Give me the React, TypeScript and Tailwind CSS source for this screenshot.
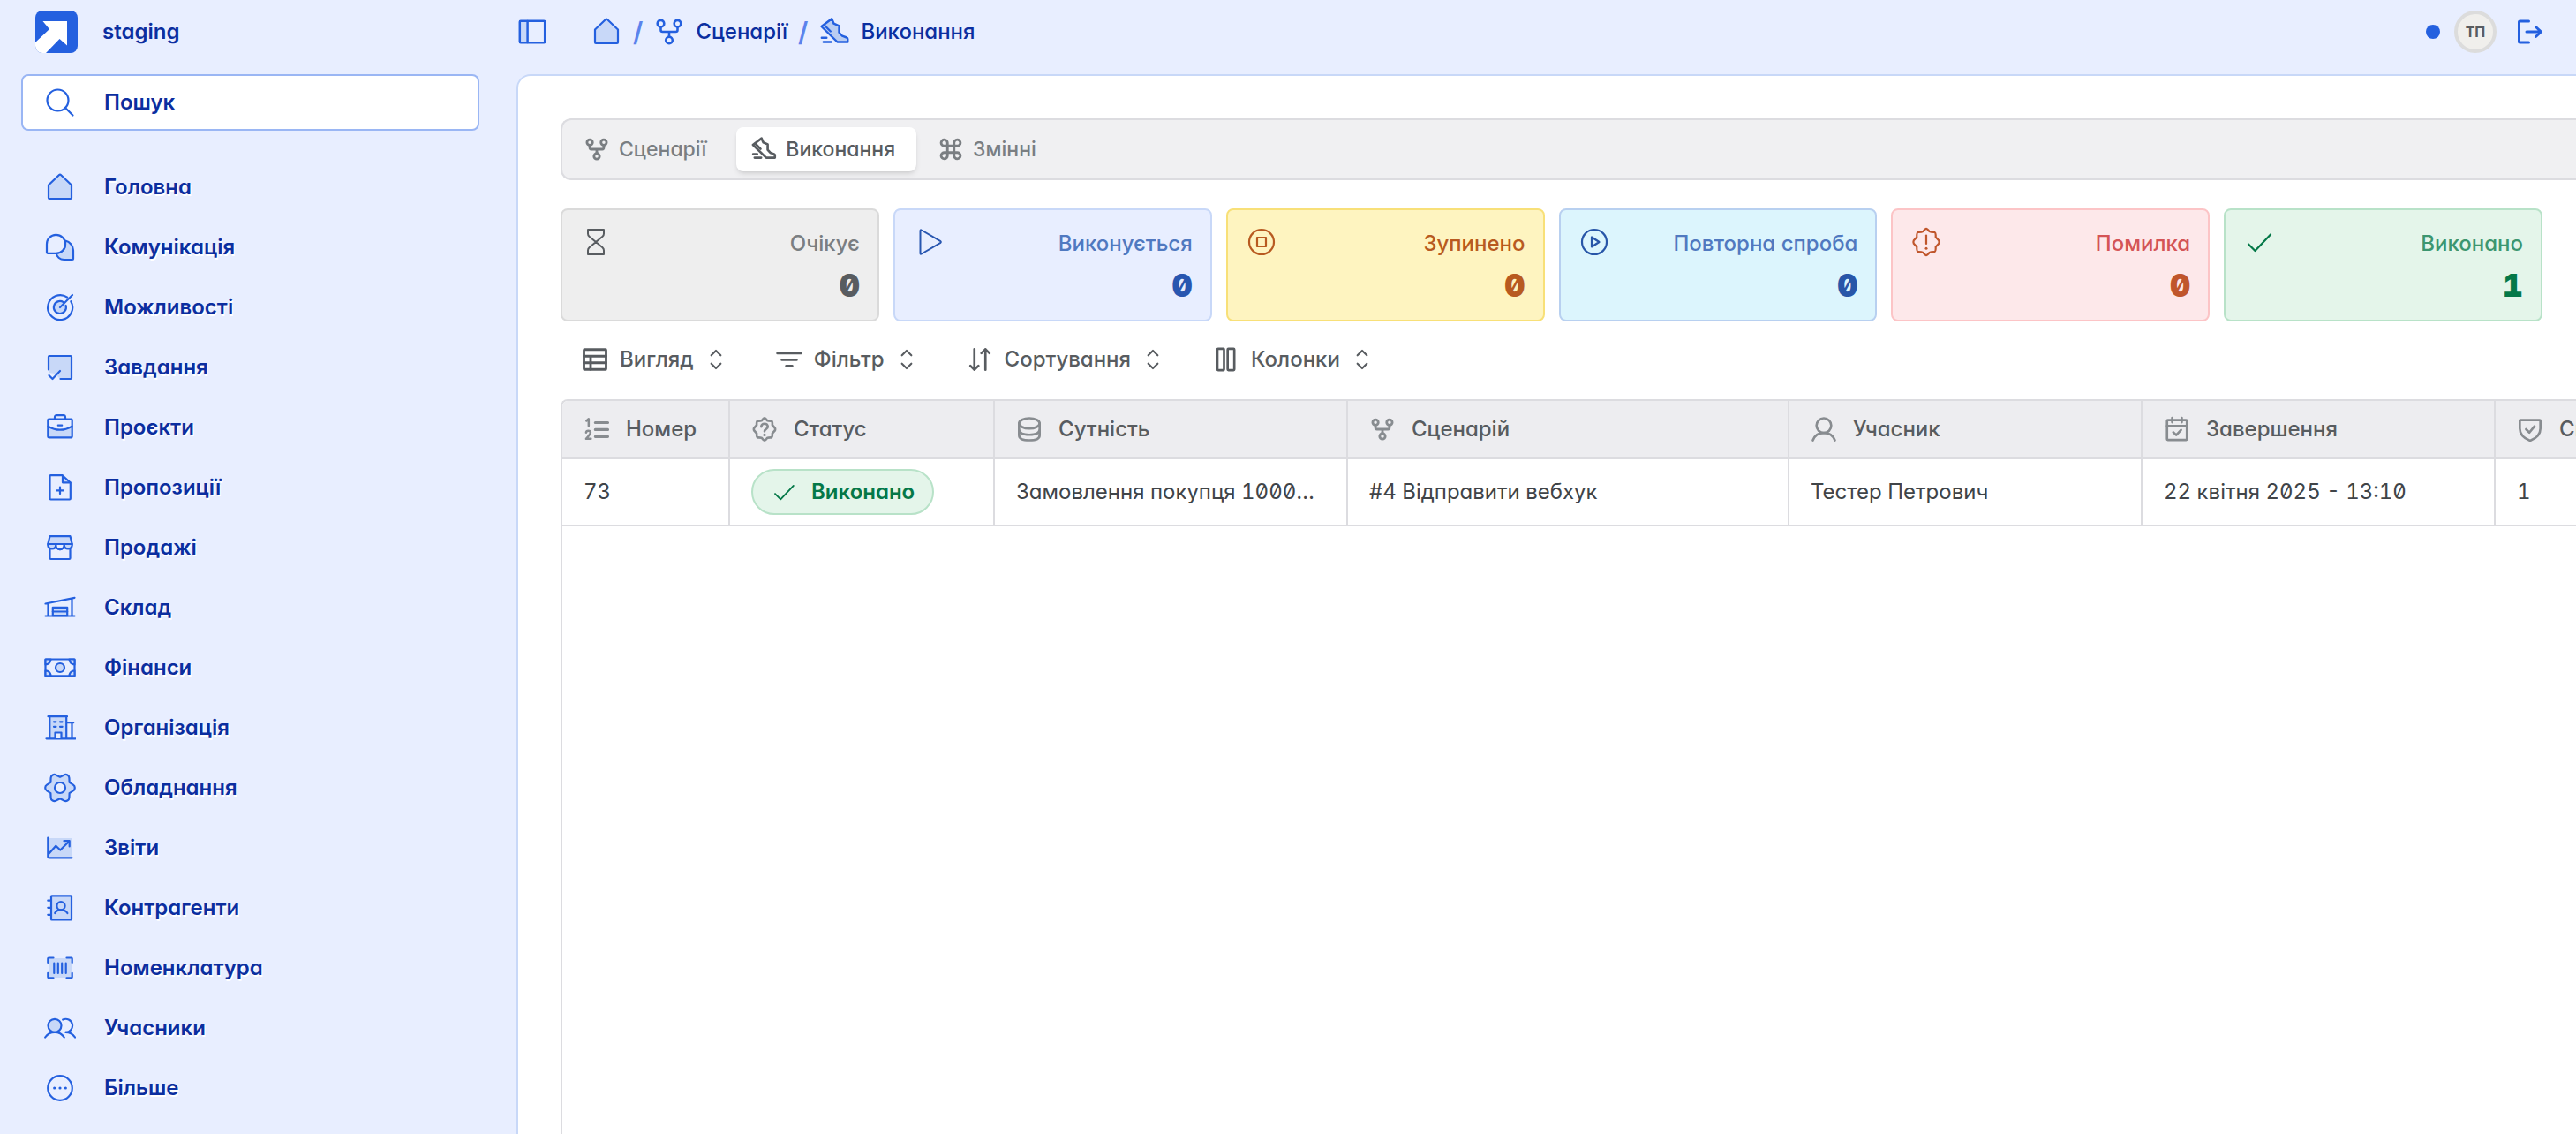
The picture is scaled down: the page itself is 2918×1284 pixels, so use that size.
import React from 'react';
import { clsx } from 'clsx';

interface IconProps {
  className?: string;
}

interface SvgProps extends IconProps {
  stroke?: string;
  children: React.ReactNode;
}

function Svg({ className = 'size-9', stroke = '2.2', children }: SvgProps) {
  return (
    <svg
      viewBox="0 0 36 36"
      fill="none"
      stroke="currentColor"
      strokeWidth={stroke}
      strokeLinecap="round"
      strokeLinejoin="round"
      aria-hidden="true"
      className={clsx('shrink-0', className)}
    >
      {children}
    </svg>
  );
}

const tint = 'fill-[#c8d8f8]';

/* Sidebar icons */

const HomeIcon = ({ className }: IconProps) => (
  <Svg className={className}>
    <path className={tint} d="M5 15.5 16.8 4.2q1.2-1.1 2.4 0L31 15.5V30q0 1-1 1H6q-1 0-1-1Z" />
  </Svg>
);

const ChatIcon = () => (
  <Svg>
    <path className={tint} d="M24 10.5A11.5 11.5 0 0 1 33 21.5V31q0 1-1 1H22.5a9.5 9.5 0 0 1-9-7.5A10 10 0 0 0 24 14Z" />
    <path fill="#e8eeff" d="M3 14.5a10.5 10.5 0 1 1 10.5 10.3H4q-1 0-1-1Z" />
  </Svg>
);

const TargetIcon = () => (
  <Svg>
    <circle cx="18" cy="18" r="7" className={tint} stroke="none" />
    <path d="M21.8 12.2A7 7 0 1 0 24.6 16" />
    <path d="M26.2 6.7A14 14 0 1 0 30.3 11.2" />
    <path d="m18 18 14-14" />
  </Svg>
);

const TaskIcon = () => (
  <Svg>
    <path className={tint} stroke="none" d="M5 5h26v26H18L12 25 5 24Z" />
    <path d="M5 20.5V6q0-1 1-1h24q1 0 1 1v24q0 1-1 1H18.5" />
    <path d="m5.500 27 4 4 8.500-9" />
  </Svg>
);

const BriefcaseIcon = () => (
  <Svg>
    <path className={tint} stroke="none" d="M4.500 16.500q13.500 8 27 0v12.500h-27Z" />
    <rect x="4.300" y="8.700" width="27.400" height="20.600" rx="1" />
    <path d="M12 8.500V6.500q0-2.300 2.300-2.300h7.400q2.300 0 2.300 2.300v2M4.500 16.700q13.500 8 27 0M15.800 15.700h4.400" />
  </Svg>
);

const ProposalIcon = () => (
  <Svg>
    <path className={tint} stroke="none" d="M21 4.500v7.800h8.500Z" />
    <path d="M6.500 5.200q0-1 1-1h13.200L29.800 12.500V30.500q0 1-1 1H7.500q-1 0-1-1Z" />
    <path d="M21 4.500v7.800h8.500M18 17.500v7.600M14.200 21.300h7.600" />
  </Svg>
);

const StoreIcon = () => (
  <Svg>
    <path className={tint} d="M6.500 5.200h23L31.700 14v1.500a4.600 4.600 0 0 1-9.100 0 4.600 4.600 0 0 1-9.200 0 4.600 4.600 0 0 1-9.100 0V14Z" />
    <path fill="#e8eeff" stroke="none" d="M13.400 15.500v-1h9.200v1a4.600 4.600 0 0 1-9.200 0Z" />
    <path d="M4.300 14h27.400M13.400 14v1.500a4.600 4.600 0 0 0 9.200 0V14M6.500 20.500v9.500q0 1 1 1h21q1 0 1-1v-9.500" />
  </Svg>
);

const WarehouseIcon = () => (
  <Svg>
    <rect className={tint} x="9.800" y="17.800" width="16.400" height="9.400" />
    <path d="M1.500 13.500 34.500 6.800M1.500 27.500h33M4.500 13v14.500M31.500 7.500v20M9.800 22.500h16.400" />
  </Svg>
);

const MoneyIcon = () => (
  <Svg>
    <rect x="1.500" y="8.500" width="33" height="18.800" rx="0.500" />
    <path className={tint} d="M1.500 14.500a6 6 0 0 0 6-6h-6ZM34.500 14.500a6 6 0 0 1-6-6h6ZM1.500 21.300a6 6 0 0 1 6 6h-6ZM34.500 21.300a6 6 0 0 0-6 6h6Z" />
    <circle className={tint} cx="18" cy="18" r="5" />
  </Svg>
);

const BuildingIcon = () => (
  <Svg>
    <path className={tint} stroke="none" d="M6 5h19v25H6Z" />
    <path d="M4.500 5.200h21.500M6.300 5.200v25M25.200 5.200v25M25.200 12.200h8M31.500 12.200v18M2.500 30.300h33" />
    <path d="M11 11.300h2.400M18 11.300h2.600M11 16.800h2.400M18 16.800h2.600" />
    <path fill="#e8eeff" d="M12.500 30v-6.500h7V30" />
  </Svg>
);

const GearIcon = () => (
  <Svg>
    <path
      className={tint}
      d="M32.900 14.600a4 4 0 0 1 0 6.800L28.650 24.150 28.400 29.200a4 4 0 0 1-5.900 3.400L18 30.300 13.500 32.600a4 4 0 0 1-5.900-3.400L7.350 24.150 3.100 21.400a4 4 0 0 1 0-6.800L7.350 11.850 7.600 6.800a4 4 0 0 1 5.900-3.400L18 5.700 22.500 3.400a4 4 0 0 1 5.900 3.400L28.650 11.850Z"
    />
    <circle cx="18" cy="18" r="6" fill="#e8eeff" />
  </Svg>
);

const ReportIcon = () => (
  <Svg>
    <path className={tint} stroke="none" d="M4.500 7h26.500v22H4.500Z" />
    <path d="M4.300 6.500v21.800q0 1 1 1h26.200M5.300 24.700l8-9 5 4.800L28.700 10.300M22.500 10.200h6.200v6.200" />
  </Svg>
);

const ContactsIcon = () => (
  <Svg>
    <rect className={tint} x="8" y="4.300" width="23" height="27.200" rx="0.800" />
    <path d="M4.300 9.700h3.500M4.300 17.800h3.500M4.300 25.800h3.500" />
    <circle cx="19" cy="15.800" r="4.600" />
    <path d="M12.200 24q1.500-3.600 6.800-3.600t7.400 3.600" />
  </Svg>
);

const BarcodeIcon = () => (
  <Svg>
    <path className={tint} stroke="none" d="M5 7h26v22H5Z" />
    <path d="M10.500 6.500H5.300q-1 0-1 1V12M25.500 6.500h5.200q1 0 1 1V12M10.500 29.300H5.300q-1 0-1-1v-4.500M25.500 29.300h5.200q1 0 1-1v-4.500M11.300 12.500v11.500M15.800 12.500v11.500M20.200 12.500v11.500M24.700 12.500v11.500" />
  </Svg>
);

const UsersIcon = () => (
  <Svg>
    <circle className={tint} cx="12" cy="15.300" r="7.500" />
    <path d="M1.200 28.500q3.800-5.700 10.800-5.700t10.700 5.700M21.200 8.600a7.500 7.500 0 1 1 3 14.200q7 0 10.800 5.700" />
  </Svg>
);

const MoreIcon = () => (
  <Svg>
    <circle cx="18" cy="18" r="13.800" />
    <path strokeWidth="3.200" d="M11.700 18h.01M18 18h.01M24.300 18h.01" />
  </Svg>
);

const SearchIcon = () => (
  <Svg className="size-9">
    <circle cx="15.500" cy="15.500" r="12" />
    <path d="m24 24 8.500 8.500" />
  </Svg>
);

/* Shared icons */

const ForkIcon = ({ className, stroke = '3.4' }: { className?: string; stroke?: string }) => (
  <Svg className={className} stroke={stroke}>
    <circle cx="8.500" cy="8.700" r="3.800" />
    <circle cx="27.500" cy="8.700" r="3.800" />
    <circle cx="18" cy="27.500" r="3.800" />
    <path d="M8.500 12.500v3.500q0 2 2 2h15q2 0 2-2v-3.500M18 18v5.500" />
  </Svg>
);

const ShoeIcon = ({ className, stroke, filled }: { className?: string; stroke?: string; filled?: boolean }) => (
  <Svg className={className} stroke={stroke}>
    <path
      className={filled ? 'fill-[#b9cdf2]' : undefined}
      d="M3.500 12 15.200 3.200l2.300 5.500 6 2.600v7.400l3.600 4 5 1.800q1.200.5 1.200 1.700v3.300H21.500Z"
    />
    <path d="m6.800 10.500 7 7M3.800 24.700h5.500M5.800 29.500h8.800" />
  </Svg>
);

const CommandIcon = ({ className }: IconProps) => (
  <Svg className={className} stroke="3.400">
    <path d="M13.500 13.500h9v9h-9ZM13.500 13.500H9.300a4.300 4.300 0 1 1 4.200-4.200ZM22.500 13.500V9.300a4.300 4.300 0 1 1 4.200 4.200ZM13.500 22.500v4.200a4.300 4.300 0 1 1-4.200-4.200ZM22.500 22.500h4.200a4.300 4.300 0 1 1-4.200 4.200Z" />
  </Svg>
);

const PanelIcon = () => (
  <Svg stroke="2.500">
    <path className="fill-[#c8d8f8]" stroke="none" d="M4 6h9v24H4Z" />
    <rect x="3.800" y="5.800" width="28.400" height="24.400" rx="1" />
    <path d="M12.600 6v24" />
  </Svg>
);

const LogoutIcon = () => (
  <Svg stroke="3">
    <path d="M16.500 6H6.500q-1 0-1 1v22q0 1 1 1h10M14 18h16.500M24.500 12.500l6 5.500-6 5.500" />
  </Svg>
);

const LogoMark = () => (
  <svg viewBox="0 0 48 48" aria-hidden="true" className="size-12 shrink-0">
    <rect width="48" height="48" rx="8" fill="#2460df" />
    <path fill="#fff" d="M8.500 12H36v27.500L27.500 32 12 48H8a8 8 0 0 1-8-8v-4l16-15Z" />
  </svg>
);

/* Status icons */

const HourglassIcon = () => (
  <Svg stroke="2">
    <path d="M9 4h18v4.500q0 2-1.500 3.300L18 18l-7.500-6.200Q9 10.500 9 8.500ZM9 32h18v-4.500q0-2-1.500-3.300L18 18l-7.500 6.200Q9 25.500 9 27.500Z" />
  </Svg>
);

const PlayIcon = () => (
  <Svg stroke="2">
    <path d="M8.500 5.200v25.600q0 1.500 1.300.7L31 19.200q1.700-1.200 0-2.400L9.800 4.500q-1.300-.8-1.300.7Z" />
  </Svg>
);

const StopIcon = () => (
  <Svg stroke="2.200">
    <circle cx="18" cy="18" r="14" />
    <rect x="13" y="13" width="10" height="10" />
  </Svg>
);

const RetryIcon = () => (
  <Svg stroke="2.200">
    <circle cx="18" cy="18" r="14" />
    <path d="M15 12.500v11l8.500-5.500Z" />
  </Svg>
);

const badgePath =
  'M18 2.800q1.200 0 3.600 3.300 1.500.8 5.600.700 1.700.4 1.500 5.600l3.500 3.900q.8 1.700 0 3.400l-3.500 3.900q.2 5.200-1.500 5.600-4.100-.1-5.600.7Q19.200 33.200 18 33.200t-3.600-3.300q-1.500-.8-5.600-.7-1.700-.4-1.500-5.600l-3.500-3.900q-.8-1.700 0-3.400l3.500-3.900q-.2-5.200 1.500-5.600 4.100.1 5.600-.7Q16.800 2.800 18 2.800Z';

const ErrorIcon = () => (
  <Svg stroke="2.200">
    <path d={badgePath} />
    <path d="M18 10.500v9.500" />
    <path strokeWidth="3" d="M18 25.200h.01" />
  </Svg>
);

const CheckIcon = ({ className }: IconProps) => (
  <Svg className={className} stroke="2.200">
    <path d="m6 20.500 7.500 7.500L31 9.500" />
  </Svg>
);

/* Toolbar icons */

const TableIcon = ({ className }: IconProps) => (
  <Svg className={className} stroke="3.400">
    <rect x="3" y="4.500" width="30" height="27" rx="1" />
    <path d="M3 13.500h30M3 22.500h30M12 13.500v18" />
  </Svg>
);

const FilterIcon = ({ className }: IconProps) => (
  <Svg className={className} stroke="3.400">
    <path d="M2 9.500h32M8 18.500h20M14 27h8" />
  </Svg>
);

const SortIcon = ({ className }: IconProps) => (
  <Svg className={className} stroke="3.200">
    <path d="M10.500 4v28M5 26.500l5.500 5.500 5.500-5.500M25.500 32V4M20 9.500 25.500 4l5.500 5.500" />
  </Svg>
);

const ColumnsIcon = ({ className }: IconProps) => (
  <Svg className={className} stroke="3.200">
    <rect x="6" y="3.500" width="9" height="29" rx="1" />
    <rect x="20" y="3.500" width="9" height="29" rx="1" />
  </Svg>
);

const ChevronsIcon = () => (
  <Svg className="size-6" stroke="3.200">
    <path d="m10 11 8-8 8 8M10 25l8 8 8-8" />
  </Svg>
);

/* Column icons */

const NumberedIcon = ({ className }: IconProps) => (
  <Svg className={className} stroke="3.800">
    <path d="M16 9h17M16 18.500h17M16 28h17" />
    <path strokeWidth="3" d="m4 6.500 3-2.500v9.500M3.500 22.500q.3-2.500 3-2.500 3 0 3 2.500 0 1.800-6 8.500h6.500" />
  </Svg>
);

const QuestionIcon = ({ className }: IconProps) => (
  <Svg className={className} stroke="3.200">
    <path d={badgePath} />
    <path d="M13.500 14.500q.5-4 4.500-4t4.500 3.800q0 2.200-2.300 3.500-2.200 1.200-2.200 3" />
    <path strokeWidth="4" d="M18 25.700h.01" />
  </Svg>
);

const DatabaseIcon = ({ className }: IconProps) => (
  <Svg className={className} stroke="3.200">
    <ellipse cx="18" cy="10" rx="14" ry="7" />
    <path d="M4 10v16q0 7 14 7t14-7V10M4 18q0 7.500 14 7.500T32 18" />
  </Svg>
);

const PersonIcon = ({ className }: IconProps) => (
  <Svg className={className} stroke="3.200">
    <circle cx="18" cy="13" r="10" />
    <path d="M3 33q4-10 15-10t15 10" />
  </Svg>
);

const CalendarIcon = ({ className }: IconProps) => (
  <Svg className={className} stroke="3.200">
    <rect x="4.500" y="5.500" width="27" height="27" rx="1" />
    <path d="M4.500 13.500h27M11.500 2.500v6M24.500 2.500v6M13 22l4 4 6.500-7" />
  </Svg>
);

const ShieldIcon = ({ className }: IconProps) => (
  <Svg className={className} stroke="3.200">
    <path d="M4 6.500q0-1 1-1h26q1 0 1 1V17q0 11-14 16.500Q4 28 4 17Z" />
    <path d="m12.500 18 4.500 4.500L24 14" />
  </Svg>
);

const navItems = [
  { label: 'Головна', icon: HomeIcon },
  { label: 'Комунікація', icon: ChatIcon },
  { label: 'Можливості', icon: TargetIcon },
  { label: 'Завдання', icon: TaskIcon },
  { label: 'Проєкти', icon: BriefcaseIcon },
  { label: 'Пропозиції', icon: ProposalIcon },
  { label: 'Продажі', icon: StoreIcon },
  { label: 'Склад', icon: WarehouseIcon },
  { label: 'Фінанси', icon: MoneyIcon },
  { label: 'Організація', icon: BuildingIcon },
  { label: 'Обладнання', icon: GearIcon },
  { label: 'Звіти', icon: ReportIcon },
  { label: 'Контрагенти', icon: ContactsIcon },
  { label: 'Номенклатура', icon: BarcodeIcon },
  { label: 'Учасники', icon: UsersIcon },
  { label: 'Більше', icon: MoreIcon },
];

const stats = [
  { label: 'Очікує', value: 0, icon: HourglassIcon, card: 'border-[#dadada] bg-[#eeeeee]', text: 'text-[#7a7e82]', strong: 'text-[#585c60]' },
  { label: 'Виконується', value: 0, icon: PlayIcon, card: 'border-[#c8d8f8] bg-[#e8eeff]', text: 'text-[#5079c0]', strong: 'text-[#2856b0]' },
  { label: 'Зупинено', value: 0, icon: StopIcon, card: 'border-[#f8e078] bg-[#fef4c0]', text: 'text-[#b85a20]', strong: 'text-[#b85a20]' },
  { label: 'Повторна спроба', value: 0, icon: RetryIcon, card: 'border-[#b8d0f0] bg-[#dcf5fd]', text: 'text-[#5079c0]', strong: 'text-[#2856a8]' },
  { label: 'Помилка', value: 0, icon: ErrorIcon, card: 'border-[#fcc4c6] bg-[#fde8ea]', text: 'text-[#d45456]', strong: 'text-[#c0562c]' },
  { label: 'Виконано', value: 1, icon: CheckIcon, card: 'border-[#b8e2c8] bg-[#e4f5ea]', text: 'text-[#3c9670]', strong: 'text-[#047848]' },
];

const tools = [
  { label: 'Вигляд', icon: TableIcon },
  { label: 'Фільтр', icon: FilterIcon },
  { label: 'Сортування', icon: SortIcon },
  { label: 'Колонки', icon: ColumnsIcon },
];

const columns = [
  { label: 'Номер', icon: NumberedIcon, width: 'w-[190px]' },
  { label: 'Статус', icon: QuestionIcon, width: 'w-[300px]' },
  { label: 'Сутність', icon: DatabaseIcon, width: 'w-[400px]' },
  { label: 'Сценарій', icon: ForkIcon, width: 'w-[500px]' },
  { label: 'Учасник', icon: PersonIcon, width: 'w-[400px]' },
  { label: 'Завершення', icon: CalendarIcon, width: 'w-[400px]' },
  { label: 'Спроба', icon: ShieldIcon, width: 'w-[400px]' },
];

function Sidebar() {
  return (
    <aside className="w-[585px] shrink-0 px-6 pt-3 text-2xl font-semibold text-[#0b2ea0]">
      <a href="#" className="flex items-center gap-7 pl-4">
        <LogoMark />
        <span>staging</span>
      </a>
      <label className="mt-6 mr-[18px] flex h-16 items-center gap-8 rounded-lg border-2 border-[#9ab6f4] bg-white pl-6 text-[#2460df]">
        <SearchIcon />
        <input
          type="text"
          aria-label="Пошук"
          placeholder="Пошук"
          className="min-w-0 flex-1 outline-none placeholder:text-[#0b2ea0] placeholder:opacity-100"
        />
      </label>
      <nav className="mt-[30px]">
        {navItems.map(({ label, icon: Icon }) => (
          <a key={label} href="#" className="flex h-[68px] items-center gap-8 pl-[26px] text-[#2460df]">
            <Icon />
            <span className="text-[#0b2ea0] [text-shadow:1px_2px_0_#fff]">{label}</span>
          </a>
        ))}
      </nav>
    </aside>
  );
}

function Header() {
  return (
    <header className="flex h-[84px] items-center pr-[34px] pb-3 text-[#2460df]">
      <button type="button" aria-label="Меню">
        <PanelIcon />
      </button>
      <nav className="ml-12 flex items-center gap-3 text-2xl font-medium text-[#0b2ea0]">
        <a href="#" aria-label="Головна" className="text-[#2460df]">
          <HomeIcon />
        </a>
        <span className="text-3xl font-semibold text-[#5b83ec]">/</span>
        <a href="#" className="flex items-center gap-3">
          <ForkIcon className="size-9 text-[#2460df]" stroke="2.600" />
          Сценарії
        </a>
        <span className="text-3xl font-semibold text-[#5b83ec]">/</span>
        <a href="#" className="flex items-center gap-3">
          <ShoeIcon className="size-9 text-[#2460df]" stroke="2.400" filled />
          Виконання
        </a>
      </nav>
      <div className="ml-auto flex items-center">
        <span className="size-4 rounded-full bg-[#2460df]" />
        <button
          type="button"
          className="mr-5 ml-4 flex size-12 items-center justify-center rounded-full border-4 border-[#dcdcdc] bg-[#f0efec] text-base font-bold text-[#585c60]"
        >
          ТП
        </button>
        <button type="button" aria-label="Вийти">
          <LogoutIcon />
        </button>
      </div>
    </header>
  );
}

function Tabs() {
  return (
    <div className="flex h-[70px] items-center gap-2 rounded-l-xl border-2 border-r-0 border-[#dcdce0] bg-[#f0f0f2] px-2 text-[23px] font-medium text-[#7a7e82]">
      <button type="button" className="flex h-[50px] items-center gap-2.5 rounded-lg pr-[26px] pl-4">
        <ForkIcon className="size-[30px]" />
        Сценарії
      </button>
      <button
        type="button"
        className="flex h-[50px] items-center gap-2.5 rounded-lg bg-white pr-6 pl-4 text-[#585c60] shadow-md"
      >
        <ShoeIcon className="size-[30px]" stroke="3.200" />
        Виконання
      </button>
      <button type="button" className="flex h-[50px] items-center gap-2.5 rounded-lg pr-6 pl-4">
        <CommandIcon className="size-[30px]" />
        Змінні
      </button>
    </div>
  );
}

function StatCards() {
  return (
    <div className="mt-8 mr-[38px] grid grid-cols-6 gap-4">
      {stats.map(({ label, value, icon: Icon, card, text, strong }) => (
        <div key={label} className={clsx('flex h-32 justify-between rounded-lg border-2 px-5 py-[18px]', card)}>
          <span className={clsx('h-9', strong)}>
            <Icon />
          </span>
          <div className="text-right">
            <div className={clsx('text-2xl leading-10 font-medium', text)}>{label}</div>
            <div className={clsx('text-4xl leading-[54px] font-black', strong)}>{value}</div>
          </div>
        </div>
      ))}
    </div>
  );
}

function Toolbar() {
  return (
    <div className="mt-[18px] flex h-[50px] items-center gap-4 pl-1 text-2xl font-medium text-[#585c60]">
      {tools.map(({ label, icon: Icon }) => (
        <button key={label} type="button" className="flex items-center gap-[13px] px-5">
          <Icon className="size-[30px]" />
          {label}
          <ChevronsIcon />
        </button>
      ))}
    </div>
  );
}

function RunsTable() {
  const cell = 'truncate border-r-2 border-b-2 border-[#dcdce0] px-6';

  return (
    <div className="mt-5 flex-1 overflow-hidden rounded-tl-lg border-t-2 border-l-2 border-[#dcdce0]">
      <table className="w-[2590px] table-fixed border-separate border-spacing-0 text-left text-2xl">
        <thead>
          <tr className="h-[66px] bg-[#ededf0] text-[#585c60]">
            {columns.map(({ label, icon: Icon, width }) => (
              <th key={label} className={clsx('border-r-2 border-b-2 border-[#dcdce0] px-6 font-medium', width)}>
                <span className="flex items-center gap-[18px]">
                  <Icon className="size-[30px] text-[#888c90]" />
                  {label}
                </span>
              </th>
            ))}
          </tr>
        </thead>
        <tbody>
          <tr className="h-[76px] text-[#404448]">
            <td className={cell}>73</td>
            <td className={cell}>
              <span className="inline-flex h-[52px] items-center gap-4 rounded-full border-2 border-[#b8e2c8] bg-[#e4f5ea] pr-5 pl-5 align-middle font-semibold text-[#047848]">
                <CheckIcon className="size-[30px]" />
                Виконано
              </span>
            </td>
            <td className={cell}>Замовлення покупця 1000045</td>
            <td className={cell}>#4 Відправити вебхук</td>
            <td className={cell}>Тестер Петрович</td>
            <td className={cell}>22 квітня 2025 - 13:10</td>
            <td className={cell}>1</td>
          </tr>
        </tbody>
      </table>
    </div>
  );
}

export default function App() {
  return (
    <div className="flex h-screen overflow-hidden bg-[#e8eeff] font-['Inter','Noto_Sans',sans-serif] [font-feature-settings:'cv11','zero','tnum']">
      <Sidebar />
      <div className="flex min-w-0 flex-1 flex-col">
        <Header />
        <main className="flex flex-1 flex-col rounded-tl-2xl border-t-2 border-l-2 border-[#c8d8f8] bg-white pt-12 pl-12">
          <Tabs />
          <StatCards />
          <Toolbar />
          <RunsTable />
        </main>
      </div>
    </div>
  );
}
